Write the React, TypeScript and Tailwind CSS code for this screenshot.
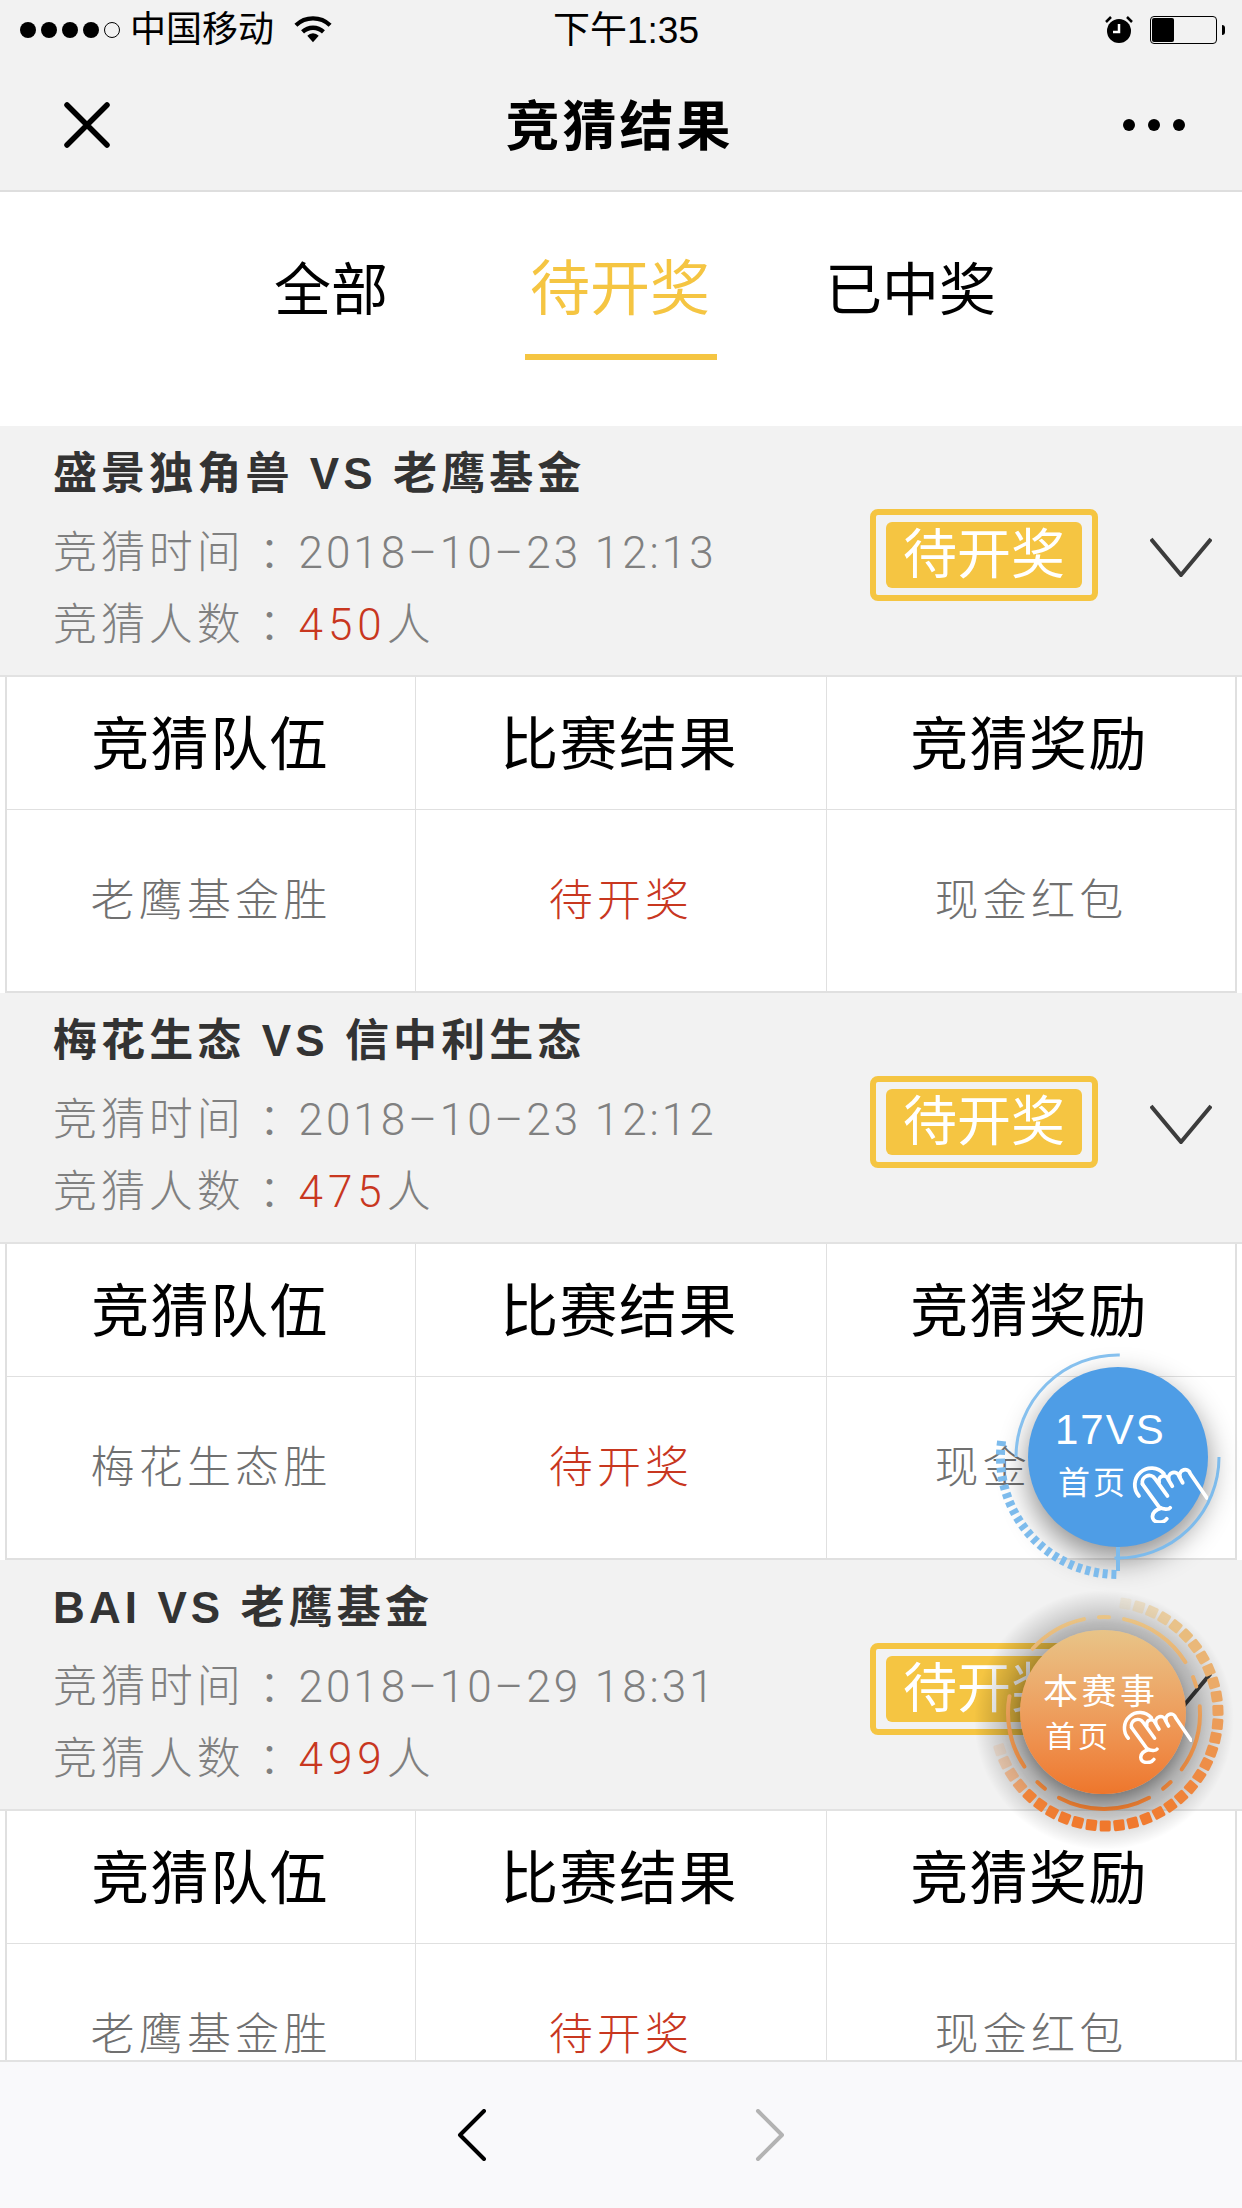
import React from "react";

const FONT = "font-['Liberation_Sans','Noto_Sans_CJK_SC',sans-serif]";
const NUM = "font-['Roboto','Noto_Sans_CJK_SC',sans-serif]";

function Hand({ className }: { className: string }) {
  return (
    <svg viewBox="0 0 225 170" className={className} fill="none" stroke="#fff" strokeWidth="11" strokeLinecap="round" strokeLinejoin="round">
      <path d="M26 92 A48 48 0 1 1 98 28" />
      <path d="M36 58 A20 20 0 0 1 72 42 L108 92" />
      <path d="M36 58 L84 124 C96 132 112 132 116 126" />
      <path d="M84 52 A13 13 0 0 1 110 44 L122 64" />
      <path d="M112 44 A13 13 0 0 1 142 36 L152 54" />
      <path d="M144 36 A13 13 0 0 1 174 28 L222 98" />
      <path d="M88 128 C60 136 56 166 84 168 C94 168 102 164 106 158" />
    </svg>
  );
}

function arc(cx: number, cy: number, r: number, a: number, b: number) {
  const p = (d: number) => [cx + r * Math.cos((d * Math.PI) / 180), cy + r * Math.sin((d * Math.PI) / 180)];
  const [x1, y1] = p(a);
  const [x2, y2] = p(b);
  return `M${x1} ${y1} A${r} ${r} 0 ${b - a > 180 ? 1 : 0} 1 ${x2} ${y2}`;
}

function BlueFloat() {
  const ticks = Array.from({ length: 23 }, (_, i) => 92 + i * 4.3);
  return (
    <div className="absolute left-[990px] top-[1330px] w-[250px] h-[250px]">
      <div className="absolute left-[38px] top-[37px] w-[180px] h-[180px] rounded-full bg-[#4e9de6] shadow-[0_12px_30px_rgba(0,0,0,0.45)] text-white">
        <div className={`absolute left-[27px] top-[40px] text-[42px] leading-[46px] tracking-[2px] ${FONT}`}>17VS</div>
        <div className={`absolute left-[30px] top-[96px] text-[32px] leading-[40px] tracking-[3px] ${FONT}`}>首页</div>
        <Hand className="absolute left-[102px] top-[97px] w-[78px] h-[59px]" />
      </div>
      <svg viewBox="0 0 250 250" className="absolute inset-0 w-full h-full">
        <path d={arc(128, 127, 102, 180, 271)} fill="none" stroke="#86c0ee" strokeWidth="3" />
        <path d={arc(128, 127, 101, 0, 92)} fill="none" stroke="#7dbbec" strokeWidth="3" />
        <path d="M128 217 V241" stroke="#7dbbec" strokeWidth="4" />
        {ticks.map((a) => {
          const c = Math.cos((a * Math.PI) / 180);
          const s = Math.sin((a * Math.PI) / 180);
          return (
            <line key={a} x1={128 + 113 * c} y1={127 + 113 * s} x2={128 + 122 * c} y2={127 + 122 * s} stroke="#7dbbec" strokeWidth="5" />
          );
        })}
      </svg>
    </div>
  );
}

function OrangeFloat() {
  const squares = Array.from({ length: 35 }, (_, i) => -80 + i * 7.1);
  const mix = (y: number) => {
    const t = Math.min(1, Math.max(0, (y + 113) / 226));
    const r = Math.round(232 + (240 - 232) * t);
    const g = Math.round(200 + (120 - 200) * t);
    const b = Math.round(140 + (44 - 140) * t);
    return `rgb(${r},${g},${b})`;
  };
  return (
    <div className="absolute left-[970px] top-[1580px] w-[270px] h-[270px]">
      <svg viewBox="0 0 270 270" className="absolute inset-0 w-full h-full">
        <defs>
          <radialGradient id="halo" cx="50%" cy="50%" r="50%">
            <stop offset="74%" stopColor="#000" stopOpacity="0.22" />
            <stop offset="100%" stopColor="#000" stopOpacity="0" />
          </radialGradient>
          <linearGradient id="thin" x1="0" y1="30" x2="0" y2="240" gradientUnits="userSpaceOnUse">
            <stop offset="0" stopColor="#e9c688" />
            <stop offset="1" stopColor="#ef7a2c" />
          </linearGradient>
        </defs>
        <circle cx="134" cy="140" r="130" fill="url(#halo)" />
        {squares.map((a, i) => {
          const x = 136 + 112 * Math.cos((a * Math.PI) / 180);
          const y = 134 + 112 * Math.sin((a * Math.PI) / 180);
          const op = i < 5 ? 0.2 + i * 0.18 : i > 30 ? 0.85 - (i - 30) * 0.17 : 1;
          return (
            <rect key={a} x={x - 5.5} y={y - 5.5} width="11" height="11" rx="1.5" fill={mix(y - 134)} opacity={op} transform={`rotate(${a} ${x} ${y})`} />
          );
        })}
        {[
          [-138, -102],
          [-93, -87],
          [-78, -32],
          [-22, -16],
          [-4, 36],
          [46, 52],
          [62, 118],
          [128, 134],
          [146, 190],
        ].map(([a, b]) => (
          <path key={a} d={arc(134, 133, 96, a, b)} fill="none" stroke="url(#thin)" strokeWidth="4" strokeLinecap="round" />
        ))}
      </svg>
      <div className="absolute left-[50px] top-[50px] w-[166px] h-[164px] rounded-full bg-gradient-to-b from-[#e8c488] to-[#ee762b] shadow-[0_8px_18px_rgba(0,0,0,0.4)] text-white">
        <div className={`absolute left-[23px] top-[40px] text-[35px] leading-[44px] tracking-[3.5px] whitespace-nowrap ${FONT}`}>本赛事</div>
        <div className={`absolute left-[25px] top-[87px] text-[30px] leading-[40px] tracking-[3px] whitespace-nowrap ${FONT}`}>首页</div>
        <Hand className="absolute left-[100px] top-[78px] w-[72px] h-[56px]" />
      </div>
    </div>
  );
}

const sections = [
  { title: "盛景独角兽 VS 老鹰基金", time: "2018–10–23 12:13", count: "450", pick: "老鹰基金胜" },
  { title: "梅花生态 VS 信中利生态", time: "2018–10–23 12:12", count: "475", pick: "梅花生态胜" },
  { title: "BAI VS 老鹰基金", time: "2018–10–29 18:31", count: "499", pick: "老鹰基金胜" },
];

function Section({ s }: { s: (typeof sections)[number] }) {
  const head = ["竞猜队伍", "比赛结果", "竞猜奖励"];
  const headPad = ["pr-[2px]", "pr-[4px]", "pr-[4px]"];
  return (
    <section className="shrink-0">
      <div className="h-[251px] bg-[#f2f2f2] border-b-2 border-[#e2e2e2] flex items-center pl-[53px] pr-[30px]">
        <div className="flex-1 pb-[2px]">
          <div className={`text-[44px] leading-[72px] font-bold tracking-[4.1px] text-[#333] ${FONT}`}>{s.title}</div>
          <div className="mt-[7px] flex items-center text-[44px] leading-[72px] font-light tracking-[3.9px] text-[#808080]">
            <span className={FONT}>竞猜时间</span>
            <span className={`ml-[14px] ${NUM}`}>：</span>
            <span className={`ml-[-8px] tracking-[3px] ${NUM}`}>{s.time}</span>
          </div>
          <div className="flex items-center text-[44px] leading-[72px] font-light tracking-[3.9px] text-[#808080]">
            <span className={FONT}>竞猜人数</span>
            <span className={`ml-[14px] ${NUM}`}>：</span>
            <span className={`ml-[-8px] tracking-[5px] text-[#c8371f] ${NUM}`}>{s.count}</span>
            <span className={FONT}>人</span>
          </div>
        </div>
        <div className="mt-[8px] w-[228px] h-[92px] border-[6px] border-[#f5c542] rounded-[8px] px-[10px] py-[7px]">
          <div className={`h-full bg-[#f5c542] rounded-[6px] flex items-center justify-center text-white text-[54px] leading-none ${FONT}`}>待开奖</div>
        </div>
        <svg viewBox="0 0 62 40" className="ml-[52px] mt-[12px] w-[62px] h-[40px]" fill="none" stroke="#3c3c3c" strokeWidth="4">
          <path d="M1 2 L31 38 L61 2" />
        </svg>
      </div>
      <div className="mx-[5px] border-x-2 border-b-2 border-[#e0e0e0] grid grid-cols-[408px_411px_1fr] grid-rows-[133px_181px] h-[316px]">
        {head.map((h, i) => (
          <div key={h} className={`flex items-center justify-center pt-[3px] border-b border-[#e0e0e0] text-[58px] tracking-[1.4px] text-black ${headPad[i]} ${i > 0 ? "border-l" : ""} ${FONT}`}>
            {h}
          </div>
        ))}
        <div className={`flex items-center justify-center text-[44px] font-light tracking-[4.2px] text-[#707070] ${FONT}`}>{s.pick}</div>
        <div className={`flex items-center justify-center border-l border-[#e0e0e0] text-[44px] font-light tracking-[4.2px] text-[#c8371f] ${FONT}`}>待开奖</div>
        <div className={`flex items-center justify-center border-l border-[#e0e0e0] text-[44px] font-light tracking-[4.2px] text-[#707070] ${FONT}`}>现金红包</div>
      </div>
    </section>
  );
}

export default function App() {
  return (
    <div className={`relative w-[1242px] h-[2208px] overflow-hidden bg-white flex flex-col ${FONT}`}>
      <header className="shrink-0 h-[192px] bg-[#f2f2f2] border-b-2 border-[#dedede] flex flex-col">
        <div className="h-[60px] flex items-center pl-[20px] pr-[17px] text-black">
          <div className="flex items-center gap-[5px] w-[105px]">
            {[0, 1, 2, 3].map((i) => (
              <span key={i} className="w-[16px] h-[16px] rounded-full bg-black" />
            ))}
            <span className="w-[16px] h-[16px] rounded-full border border-black" />
          </div>
          <span className="ml-[5px] text-[36px] leading-none">中国移动</span>
          <svg viewBox="0 0 40 28" className="ml-[20px] w-[38px] h-[28px]" fill="none" stroke="#000" strokeWidth="4.5">
            <path d="M2 9 A26 26 0 0 1 38 9" />
            <path d="M9 16 A16 16 0 0 1 31 16" />
            <path d="M20 27 L14 20 A8 8 0 0 1 26 20 Z" fill="#000" stroke="none" />
          </svg>
          <span className="ml-[221px] text-[37px] leading-none">下午1:35</span>
          <div className="flex-1" />
          <svg viewBox="0 0 28 28" className="w-[28px] h-[28px]">
            <circle cx="14" cy="15" r="12" fill="#000" />
            <path d="M14 8 V16 H8" stroke="#fff" strokeWidth="2.5" fill="none" />
            <path d="M1 6 L6 1 M27 6 L22 1" stroke="#000" strokeWidth="2.5" />
          </svg>
          <div className="ml-[17px] mr-[3px] w-[67px] h-[28px] border border-black rounded-[4px] p-[1px]">
            <div className="w-[22px] h-full bg-black rounded-[2px]" />
          </div>
          <div className="ml-[2px] w-[3px] h-[10px] bg-black rounded-r-full" />
        </div>
        <div className="flex-1 flex items-center justify-between pl-[64px] pr-[57px]">
          <svg viewBox="0 0 46 46" className="w-[46px] h-[46px]" stroke="#000" strokeWidth="5.5" strokeLinecap="round">
            <path d="M3 3 L43 43 M43 3 L3 43" />
          </svg>
          <span className="text-[54px] leading-none font-bold tracking-[3px] ml-[6px] mt-[4px]">竞猜结果</span>
          <div className="flex gap-[13px]">
            <span className="w-[12px] h-[12px] rounded-full bg-black" />
            <span className="w-[12px] h-[12px] rounded-full bg-black" />
            <span className="w-[12px] h-[12px] rounded-full bg-black" />
          </div>
        </div>
      </header>

      <nav className="shrink-0 h-[234px] bg-white flex items-start text-[57px] leading-none text-black pl-[274px]">
        <span className="pt-[70px]">全部</span>
        <span className="ml-[137px] w-[192px] h-[168px] border-b-[6px] border-[#f5c542] pt-[68px] pr-[2px] text-center text-[#f5c542] text-[60px]">待开奖</span>
        <span className="ml-[108px] pt-[70px]">已中奖</span>
      </nav>

      <main className="flex-1 min-h-0 overflow-hidden flex flex-col">
        {sections.map((s) => (
          <Section key={s.title} s={s} />
        ))}
      </main>

      <footer className="shrink-0 h-[148px] bg-[#f9f9fb] border-t-2 border-[#e2e2e2] flex items-center justify-center gap-[268px]">
        <svg viewBox="0 0 30 52" className="w-[30px] h-[52px]" fill="none" stroke="#000" strokeWidth="4" strokeLinecap="round" strokeLinejoin="round">
          <path d="M27 2 L3 26 L27 50" />
        </svg>
        <svg viewBox="0 0 30 52" className="w-[30px] h-[52px]" fill="none" stroke="#b3b3b3" strokeWidth="4" strokeLinecap="round" strokeLinejoin="round">
          <path d="M3 2 L27 26 L3 50" />
        </svg>
      </footer>

      <BlueFloat />
      <OrangeFloat />
    </div>
  );
}
